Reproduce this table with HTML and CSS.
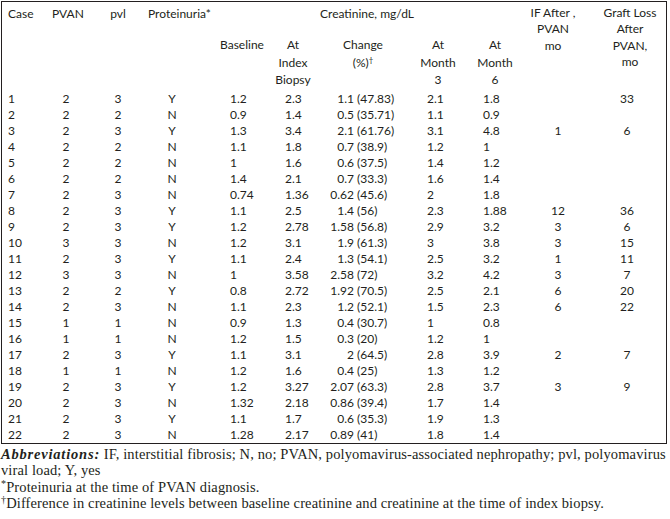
FILE: index.html
```html
<!DOCTYPE html>
<html lang="en">
<head>
<meta charset="utf-8">
<title>PVAN cases</title>
<link rel="stylesheet" href="styles.css">
</head>
<body>
<table class="tbl">
  <colgroup>
    <col class="w-case"><col class="w-pvan"><col class="w-pvl"><col class="w-prot"><col class="w-base"><col class="w-idx"><col class="w-chg"><col class="w-m3"><col class="w-m6"><col class="w-if"><col class="w-gl">
  </colgroup>
  <thead>
    <tr class="h1">
      <th rowspan="2" class="hl c-case">Case</th>
      <th rowspan="2" class="hl c-pvan">PVAN</th>
      <th rowspan="2" class="hl c-pvl">pvl</th>
      <th rowspan="2" class="hl c-prot">Proteinuria*</th>
      <th colspan="5" class="hc">Creatinine, mg/dL</th>
      <th rowspan="2" class="hr c-if">IF After ,<br>PVAN<br>mo</th>
      <th rowspan="2" class="hr c-gl">Graft Loss<br>After<br>PVAN,<br>mo</th>
    </tr>
    <tr class="h2">
      <th class="c-base">Baseline</th>
      <th class="c-idx">At<br>Index<br>Biopsy</th>
      <th class="c-chg">Change<br>(%)<sup>†</sup></th>
      <th class="c-m3">At<br>Month<br>3</th>
      <th class="c-m6">At<br>Month<br>6</th>
    </tr>
  </thead>
  <tbody>
    <tr><td class="d-case">1</td><td class="d-pvan">2</td><td class="d-pvl">3</td><td class="d-prot">Y</td><td class="d-base">1.2</td><td class="d-idx">2.3</td><td class="d-chg"><span class="n">1.1</span> (47.83)</td><td class="d-m3">2.1</td><td class="d-m6">1.8</td><td class="d-if"></td><td class="d-gl">33</td></tr>
    <tr><td class="d-case">2</td><td class="d-pvan">2</td><td class="d-pvl">2</td><td class="d-prot">N</td><td class="d-base">0.9</td><td class="d-idx">1.4</td><td class="d-chg"><span class="n">0.5</span> (35.71)</td><td class="d-m3">1.1</td><td class="d-m6">0.9</td><td class="d-if"></td><td class="d-gl"></td></tr>
    <tr><td class="d-case">3</td><td class="d-pvan">2</td><td class="d-pvl">3</td><td class="d-prot">Y</td><td class="d-base">1.3</td><td class="d-idx">3.4</td><td class="d-chg"><span class="n">2.1</span> (61.76)</td><td class="d-m3">3.1</td><td class="d-m6">4.8</td><td class="d-if">1</td><td class="d-gl">6</td></tr>
    <tr><td class="d-case">4</td><td class="d-pvan">2</td><td class="d-pvl">2</td><td class="d-prot">N</td><td class="d-base">1.1</td><td class="d-idx">1.8</td><td class="d-chg"><span class="n">0.7</span> (38.9)</td><td class="d-m3">1.2</td><td class="d-m6">1</td><td class="d-if"></td><td class="d-gl"></td></tr>
    <tr><td class="d-case">5</td><td class="d-pvan">2</td><td class="d-pvl">2</td><td class="d-prot">N</td><td class="d-base">1</td><td class="d-idx">1.6</td><td class="d-chg"><span class="n">0.6</span> (37.5)</td><td class="d-m3">1.4</td><td class="d-m6">1.2</td><td class="d-if"></td><td class="d-gl"></td></tr>
    <tr><td class="d-case">6</td><td class="d-pvan">2</td><td class="d-pvl">2</td><td class="d-prot">N</td><td class="d-base">1.4</td><td class="d-idx">2.1</td><td class="d-chg"><span class="n">0.7</span> (33.3)</td><td class="d-m3">1.6</td><td class="d-m6">1.4</td><td class="d-if"></td><td class="d-gl"></td></tr>
    <tr><td class="d-case">7</td><td class="d-pvan">2</td><td class="d-pvl">3</td><td class="d-prot">N</td><td class="d-base">0.74</td><td class="d-idx">1.36</td><td class="d-chg"><span class="n">0.62</span> (45.6)</td><td class="d-m3">2</td><td class="d-m6">1.8</td><td class="d-if"></td><td class="d-gl"></td></tr>
    <tr><td class="d-case">8</td><td class="d-pvan">2</td><td class="d-pvl">3</td><td class="d-prot">Y</td><td class="d-base">1.1</td><td class="d-idx">2.5</td><td class="d-chg"><span class="n">1.4</span> (56)</td><td class="d-m3">2.3</td><td class="d-m6">1.88</td><td class="d-if">12</td><td class="d-gl">36</td></tr>
    <tr><td class="d-case">9</td><td class="d-pvan">2</td><td class="d-pvl">3</td><td class="d-prot">Y</td><td class="d-base">1.2</td><td class="d-idx">2.78</td><td class="d-chg"><span class="n">1.58</span> (56.8)</td><td class="d-m3">2.9</td><td class="d-m6">3.2</td><td class="d-if">3</td><td class="d-gl">6</td></tr>
    <tr><td class="d-case">10</td><td class="d-pvan">3</td><td class="d-pvl">3</td><td class="d-prot">N</td><td class="d-base">1.2</td><td class="d-idx">3.1</td><td class="d-chg"><span class="n">1.9</span> (61.3)</td><td class="d-m3">3</td><td class="d-m6">3.8</td><td class="d-if">3</td><td class="d-gl">15</td></tr>
    <tr><td class="d-case">11</td><td class="d-pvan">2</td><td class="d-pvl">3</td><td class="d-prot">Y</td><td class="d-base">1.1</td><td class="d-idx">2.4</td><td class="d-chg"><span class="n">1.3</span> (54.1)</td><td class="d-m3">2.5</td><td class="d-m6">3.2</td><td class="d-if">1</td><td class="d-gl">11</td></tr>
    <tr><td class="d-case">12</td><td class="d-pvan">3</td><td class="d-pvl">3</td><td class="d-prot">N</td><td class="d-base">1</td><td class="d-idx">3.58</td><td class="d-chg"><span class="n">2.58</span> (72)</td><td class="d-m3">3.2</td><td class="d-m6">4.2</td><td class="d-if">3</td><td class="d-gl">7</td></tr>
    <tr><td class="d-case">13</td><td class="d-pvan">2</td><td class="d-pvl">2</td><td class="d-prot">Y</td><td class="d-base">0.8</td><td class="d-idx">2.72</td><td class="d-chg"><span class="n">1.92</span> (70.5)</td><td class="d-m3">2.5</td><td class="d-m6">2.1</td><td class="d-if">6</td><td class="d-gl">20</td></tr>
    <tr><td class="d-case">14</td><td class="d-pvan">2</td><td class="d-pvl">3</td><td class="d-prot">N</td><td class="d-base">1.1</td><td class="d-idx">2.3</td><td class="d-chg"><span class="n">1.2</span> (52.1)</td><td class="d-m3">1.5</td><td class="d-m6">2.3</td><td class="d-if">6</td><td class="d-gl">22</td></tr>
    <tr><td class="d-case">15</td><td class="d-pvan">1</td><td class="d-pvl">1</td><td class="d-prot">N</td><td class="d-base">0.9</td><td class="d-idx">1.3</td><td class="d-chg"><span class="n">0.4</span> (30.7)</td><td class="d-m3">1</td><td class="d-m6">0.8</td><td class="d-if"></td><td class="d-gl"></td></tr>
    <tr><td class="d-case">16</td><td class="d-pvan">1</td><td class="d-pvl">1</td><td class="d-prot">N</td><td class="d-base">1.2</td><td class="d-idx">1.5</td><td class="d-chg"><span class="n">0.3</span> (20)</td><td class="d-m3">1.2</td><td class="d-m6">1</td><td class="d-if"></td><td class="d-gl"></td></tr>
    <tr><td class="d-case">17</td><td class="d-pvan">2</td><td class="d-pvl">3</td><td class="d-prot">Y</td><td class="d-base">1.1</td><td class="d-idx">3.1</td><td class="d-chg"><span class="n">2</span> (64.5)</td><td class="d-m3">2.8</td><td class="d-m6">3.9</td><td class="d-if">2</td><td class="d-gl">7</td></tr>
    <tr><td class="d-case">18</td><td class="d-pvan">1</td><td class="d-pvl">1</td><td class="d-prot">N</td><td class="d-base">1.2</td><td class="d-idx">1.6</td><td class="d-chg"><span class="n">0.4</span> (25)</td><td class="d-m3">1.3</td><td class="d-m6">1.2</td><td class="d-if"></td><td class="d-gl"></td></tr>
    <tr><td class="d-case">19</td><td class="d-pvan">2</td><td class="d-pvl">3</td><td class="d-prot">Y</td><td class="d-base">1.2</td><td class="d-idx">3.27</td><td class="d-chg"><span class="n">2.07</span> (63.3)</td><td class="d-m3">2.8</td><td class="d-m6">3.7</td><td class="d-if">3</td><td class="d-gl">9</td></tr>
    <tr><td class="d-case">20</td><td class="d-pvan">2</td><td class="d-pvl">3</td><td class="d-prot">N</td><td class="d-base">1.32</td><td class="d-idx">2.18</td><td class="d-chg"><span class="n">0.86</span> (39.4)</td><td class="d-m3">1.7</td><td class="d-m6">1.4</td><td class="d-if"></td><td class="d-gl"></td></tr>
    <tr><td class="d-case">21</td><td class="d-pvan">2</td><td class="d-pvl">3</td><td class="d-prot">Y</td><td class="d-base">1.1</td><td class="d-idx">1.7</td><td class="d-chg"><span class="n">0.6</span> (35.3)</td><td class="d-m3">1.9</td><td class="d-m6">1.3</td><td class="d-if"></td><td class="d-gl"></td></tr>
    <tr><td class="d-case">22</td><td class="d-pvan">2</td><td class="d-pvl">3</td><td class="d-prot">N</td><td class="d-base">1.28</td><td class="d-idx">2.17</td><td class="d-chg"><span class="n">0.89</span> (41)</td><td class="d-m3">1.8</td><td class="d-m6">1.4</td><td class="d-if"></td><td class="d-gl"></td></tr>
  </tbody>
</table>
<div class="notes">
  <p><b class="abbr"><i>Abbreviations:</i></b> IF, interstitial fibrosis; N, no; PVAN, polyomavirus-associated nephropathy; pvl, polyomavirus<br>viral load; Y, yes</p>
  <p><sup>*</sup>Proteinuria at the time of PVAN diagnosis.</p>
  <p><sup>†</sup>Difference in creatinine levels between baseline creatinine and creatinine at the time of index biopsy.</p>
</div>
</body>
</html>
```

FILE: styles.css
```css
html, body {
  margin: 0;
  padding: 0;
  background: #ffffff;
  color: #231f20;
}

.tbl {
  margin: 1px 0 0 1px;
  width: 666px;
  table-layout: fixed;
  border-collapse: separate;
  border-spacing: 0;
  border: 1px solid #231f20;
  font-family: Lato, "Liberation Sans", sans-serif;
  font-size: 12px;
  color: #231f20;
}

.w-case { width: 48px; }
.w-pvan { width: 36px; }
.w-pvl { width: 60px; }
.w-prot { width: 66px; }
.w-base { width: 60px; }
.w-idx { width: 46px; }
.w-chg { width: 90px; }
.w-m3 { width: 60px; }
.w-m6 { width: 54px; }
.w-if { width: 70px; }
.w-gl { width: 74px; }

th, td {
  padding: 0;
  font-weight: normal;
  white-space: nowrap;
}

th {
  vertical-align: top;
  line-height: 17.5px;
  text-align: center;
}

.h1 th {
  height: 31px;
  padding-top: 3px;
}

.h2 th {
  height: 55px;
}

.hl { text-align: left; }
.hr { line-height: 16.4px; }

.c-case { padding-left: 6px; }
.c-pvan { padding-left: 2px; }
.c-pvl { padding-left: 4px; text-align: center; }
.c-prot { padding-left: 2px; }
.c-idx { padding-right: 4px; }
.c-if { padding-right: 8px; }
.c-gl { padding-left: 2px; }

sup {
  font-size: 0.65em;
  line-height: 0;
  vertical-align: 0.55em;
}

td {
  height: 16px;
  line-height: 16px;
  vertical-align: middle;
}

.d-case { padding-left: 6px; text-align: left; }
.d-pvan { text-align: center; padding-right: 4px; }
.d-pvl { text-align: center; padding-left: 4px; }
.d-prot { text-align: center; padding-right: 14px; }
.d-base { padding-left: 18px; }
.d-idx { padding-left: 13px; }
.d-chg { padding-left: 0; }
.d-chg .n {
  display: inline-block;
  width: 36px;
  text-align: right;
}
.d-m3 { padding-left: 19px; }
.d-m6 { padding-left: 15px; }
.d-if { text-align: center; padding-left: 2px; }
.d-gl { text-align: center; padding-right: 4px; }

.notes {
  margin-top: 2px;
  padding-left: 1px;
  font-family: "Liberation Serif", "Times New Roman", serif;
  font-size: 14.5px;
  letter-spacing: 0.12px;
  line-height: 16.4px;
  color: #231f20;
}

.notes p {
  margin: 0;
  white-space: nowrap;
}

.notes .abbr {
  letter-spacing: 0.8px;
}

.notes sup {
  font-size: 0.7em;
  vertical-align: 0.5em;
}
```
